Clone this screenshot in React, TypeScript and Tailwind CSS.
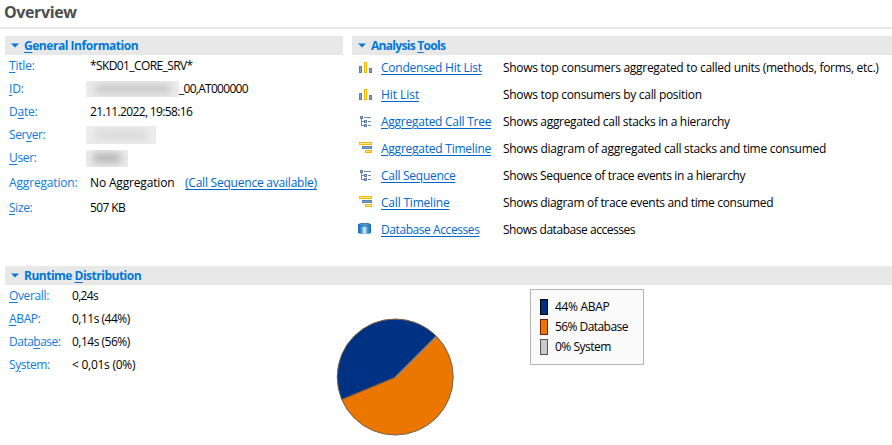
import type { ReactNode } from "react";

const toolRows = [
  { icon: "bars", name: "Condensed Hit List", nameTrack: "tracking-[-0.24px]", text: "Shows top consumers aggregated to called units (methods, forms, etc.)", track: "tracking-[-0.29px]" },
  { icon: "bars", name: "Hit List", nameTrack: "tracking-[-0.05px]", text: "Shows top consumers by call position", track: "tracking-[-0.3px]" },
  { icon: "tree", name: "Aggregated Call Tree", nameTrack: "tracking-[-0.26px]", text: "Shows aggregated call stacks in a hierarchy", track: "tracking-[-0.32px]" },
  { icon: "time", name: "Aggregated Timeline", nameTrack: "tracking-[-0.24px]", text: "Shows diagram of aggregated call stacks and time consumed", track: "tracking-[-0.29px]" },
  { icon: "tree", name: "Call Sequence", nameTrack: "tracking-[-0.27px]", text: "Shows Sequence of trace events in a hierarchy", track: "tracking-[-0.37px]" },
  { icon: "time", name: "Call Timeline", nameTrack: "tracking-[-0.2px]", text: "Shows diagram of trace events and time consumed", track: "tracking-[-0.33px]" },
  { icon: "db", name: "Database Accesses", nameTrack: "tracking-[-0.42px]", text: "Shows database accesses", track: "tracking-[-0.46px]" },
];

function Icon({ kind }: { kind: string }) {
  return (
    <svg width="16" height="16" viewBox="0 0 16 16" shapeRendering={kind === "db" ? "auto" : "crispEdges"}>
      {kind === "bars" && (
        <>
          <path d="M2.5 6.5h2v6h-2zM12.5 8.5h2v4h-2z" fill="#86a3c9" stroke="#5b7fb0" />
          <path d="M7.5 2.5h2v10h-2z" fill="#ffe88a" stroke="#f0bb00" />
        </>
      )}
      {kind === "tree" && (
        <>
          <path d="M4.5 5v6.500h3M4.500 7.500h3M7 3.500h7M11 7.500h3M11 11.500h3" fill="none" stroke="#7088b0" />
          <path d="M3.500 2.500h2v2h-2zM7.500 6.500h2v2h-2zM7.500 10.500h2v2h-2z" fill="#b9cbe4" stroke="#5c79a8" />
        </>
      )}
      {kind === "time" && (
        <>
          <path d="M2.500 1.500h12v2h-12zM8.500 9.500h6v2h-6z" fill="#ffe680" stroke="#f0bb00" />
          <path d="M5.500 5.500h9v2h-9z" fill="#86a3c9" stroke="#5b7fb0" />
        </>
      )}
      {kind === "db" && (
        <>
          <defs>
            <linearGradient id="drum">
              <stop offset="0" stopColor="#1565ae" />
              <stop offset=".25" stopColor="#3f93d2" />
              <stop offset=".5" stopColor="#d4effb" />
              <stop offset=".75" stopColor="#3f93d2" />
              <stop offset="1" stopColor="#1565ae" />
            </linearGradient>
          </defs>
          <path d="M1 3C1 .5 14 .5 14 3v7.500c0 2-13 2-13 0z" fill="url(#drum)" />
          <ellipse cx="7.500" cy="2.800" rx="6" ry="1.400" fill="#4f9bd6" stroke="#1b62a5" strokeWidth=".8" />
        </>
      )}
    </svg>
  );
}

function Header({ children, track }: { children: ReactNode; track: string }) {
  return (
    <div className={`flex h-[19px] items-center bg-[#e8e8e8] pl-[6px] text-[12px] font-bold leading-[19px] text-[#0078d7] ${track}`}>
      <svg width="8" height="5" viewBox="0 0 8 5" className="mr-[5px]"><path d="M0 .5h8L4 4.500z" fill="#0078d7" /></svg>
      <h2>{children}</h2>
    </div>
  );
}

const U = ({ children }: { children: ReactNode }) => <span className="underline underline-offset-2">{children}</span>;

function Row({ label, children, h, w = "w-[81px]", track = "", labelTrack = "tracking-[-0.2px]" }: { label: ReactNode; children: ReactNode; h: string; w?: string; track?: string; labelTrack?: string }) {
  return (
    <div className={`flex items-center pb-px ${h}`}>
      <div className={`shrink-0 text-[#0f7ad8] ${w} ${labelTrack}`}>{label}</div>
      <div className={`flex items-center ${track}`}>{children}</div>
    </div>
  );
}

function Redacted({ size, ink }: { size: string; ink: string }) {
  return (
    <span className={`-ml-1 flex items-center justify-center overflow-hidden bg-[#ececec] ${size}`}>
      <span className={`h-2 blur-[4px] ${ink}`} />
    </span>
  );
}

export default function App() {
  return (
    <main className="h-[445px] w-[892px] overflow-hidden whitespace-nowrap bg-white font-['Open_Sans','Noto_Sans',sans-serif] text-[12px] leading-4 tracking-[-0.16px] text-black">
      <div className="h-[29px] border-b-2 border-[#e8e8e8] pl-1">
        <h1 className="text-[16px] font-bold leading-6 tracking-[-0.4px] text-[#4d4d4d]">Overview</h1>
      </div>
      <div className="flex pl-[5px] pt-[7px]">
        <section className="w-[338px]">
          <Header track="tracking-[-0.46px]"><U>G</U>eneral Information</Header>
          <div className="pl-1">
            <Row h="h-[23px]" track="tracking-[-0.6px]" label={<><U>T</U>itle:</>}>*SKD01_CORE_SRV*</Row>
            <Row h="h-[23px]" track="tracking-[-0.72px]" label={<><U>I</U>D:</>}>
              <Redacted size="h-4 w-[93px]" ink="w-[76px] bg-[#c2c2c2]" />_00,AT000000
            </Row>
            <Row h="h-[23px]" track="tracking-[-0.63px]" label={<>D<U>a</U>te:</>}>21.11.2022, 19:58:16</Row>
            <Row h="h-[23px]" labelTrack="tracking-[-0.38px]" label={<>Ser<U>v</U>er:</>}><Redacted size="h-[18px] w-[70px]" ink="w-[52px] bg-[#d6d6d6]" /></Row>
            <Row h="h-[23px]" labelTrack="tracking-[-0.36px]" label={<><U>U</U>ser:</>}><Redacted size="h-[17px] w-[42px]" ink="w-[28px] bg-[#a8a8a8]" /></Row>
            <Row h="h-[27px]" labelTrack="tracking-[-0.16px]" label="Aggregation:">
              <span className="w-[95px]">No Aggregation</span>
              <a className="tracking-[-0.22px] text-[#0066cc] underline underline-offset-2">(Call Sequence available)</a>
            </Row>
            <Row h="h-[23px]" track="tracking-[-0.6px]" labelTrack="tracking-[-0.36px]" label={<><U>S</U>ize:</>}>507 KB</Row>
          </div>
        </section>
        <section className="ml-[9px] w-[540px]">
          <Header track="tracking-[-0.7px]">Analysis <U>T</U>ools</Header>
          {toolRows.map((r) => (
            <div key={r.name} className="flex h-[27px] items-center pb-px pl-[5px]">
              <Icon kind={r.icon} />
              <div className="ml-2 w-[122px] shrink-0">
                <a className={`text-[#0066cc] underline underline-offset-2 ${r.nameTrack}`}>{r.name}</a>
              </div>
              <span className={r.track}>{r.text}</span>
            </div>
          ))}
        </section>
      </div>
      <section className="ml-[5px] mt-[22px]">
        <Header track="tracking-[-0.5px]">Runtime <U>D</U>istribution</Header>
        <div className="flex">
          <div className="w-[331px] pl-1">
            <Row w="w-[63px]" h="h-[23px]" track="tracking-[-0.7px]" labelTrack="tracking-[-0.36px]" label={<><U>O</U>verall:</>}>0,24s</Row>
            <Row w="w-[63px]" h="h-[23px]" track="tracking-[-0.5px]" labelTrack="tracking-[-0.36px]" label={<><U>A</U>BAP:</>}>0,11s (44%)</Row>
            <Row w="w-[63px]" h="h-[23px]" track="tracking-[-0.5px]" labelTrack="tracking-[-0.5px]" label={<>Data<U>b</U>ase:</>}>0,14s (56%)</Row>
            <Row w="w-[63px]" h="h-[23px]" track="tracking-[-0.26px]" labelTrack="tracking-[-0.42px]" label={<>S<U>y</U>stem:</>}>&lt; 0,01s (0%)</Row>
          </div>
          <svg width="120" height="120" viewBox="0 0 120 120" className="mt-[32px]">
            <circle cx="59.200" cy="60" r="58" fill="#eb7700" />
            <path d="M59.500 60.300L5.800 82.500A58 58 0 0 1 100.500 19.300z" fill="#003283" />
            <path d="M5.800 82.500L59.500 60.300" fill="none" stroke="#86603c" strokeWidth="1.200" />
            <path d="M59.500 60.300L100.500 19.300" fill="none" stroke="#8f8480" strokeWidth="1.600" />
            <circle cx="59.200" cy="60" r="58" fill="none" stroke="#74624e" />
          </svg>
          <div className="ml-[74px] mt-1 flex h-[76px] w-[114px] flex-col gap-1 border border-[#b4b4b4] bg-[#fafafa] pl-[9px] pt-[9px]">
            <div className="flex items-center tracking-[-0.3px]"><i className="mr-[7px] h-4 w-2 border border-black bg-[#003283]" />44% ABAP</div>
            <div className="flex items-center tracking-[-0.56px]"><i className="mr-[7px] h-4 w-2 border border-[#761d08] bg-[#eb7700]" />56% Database</div>
            <div className="flex items-center tracking-[-0.5px]"><i className="mr-[7px] h-4 w-2 border border-[#555] bg-[#cacaca]" />0% System</div>
          </div>
        </div>
      </section>
    </main>
  );
}
